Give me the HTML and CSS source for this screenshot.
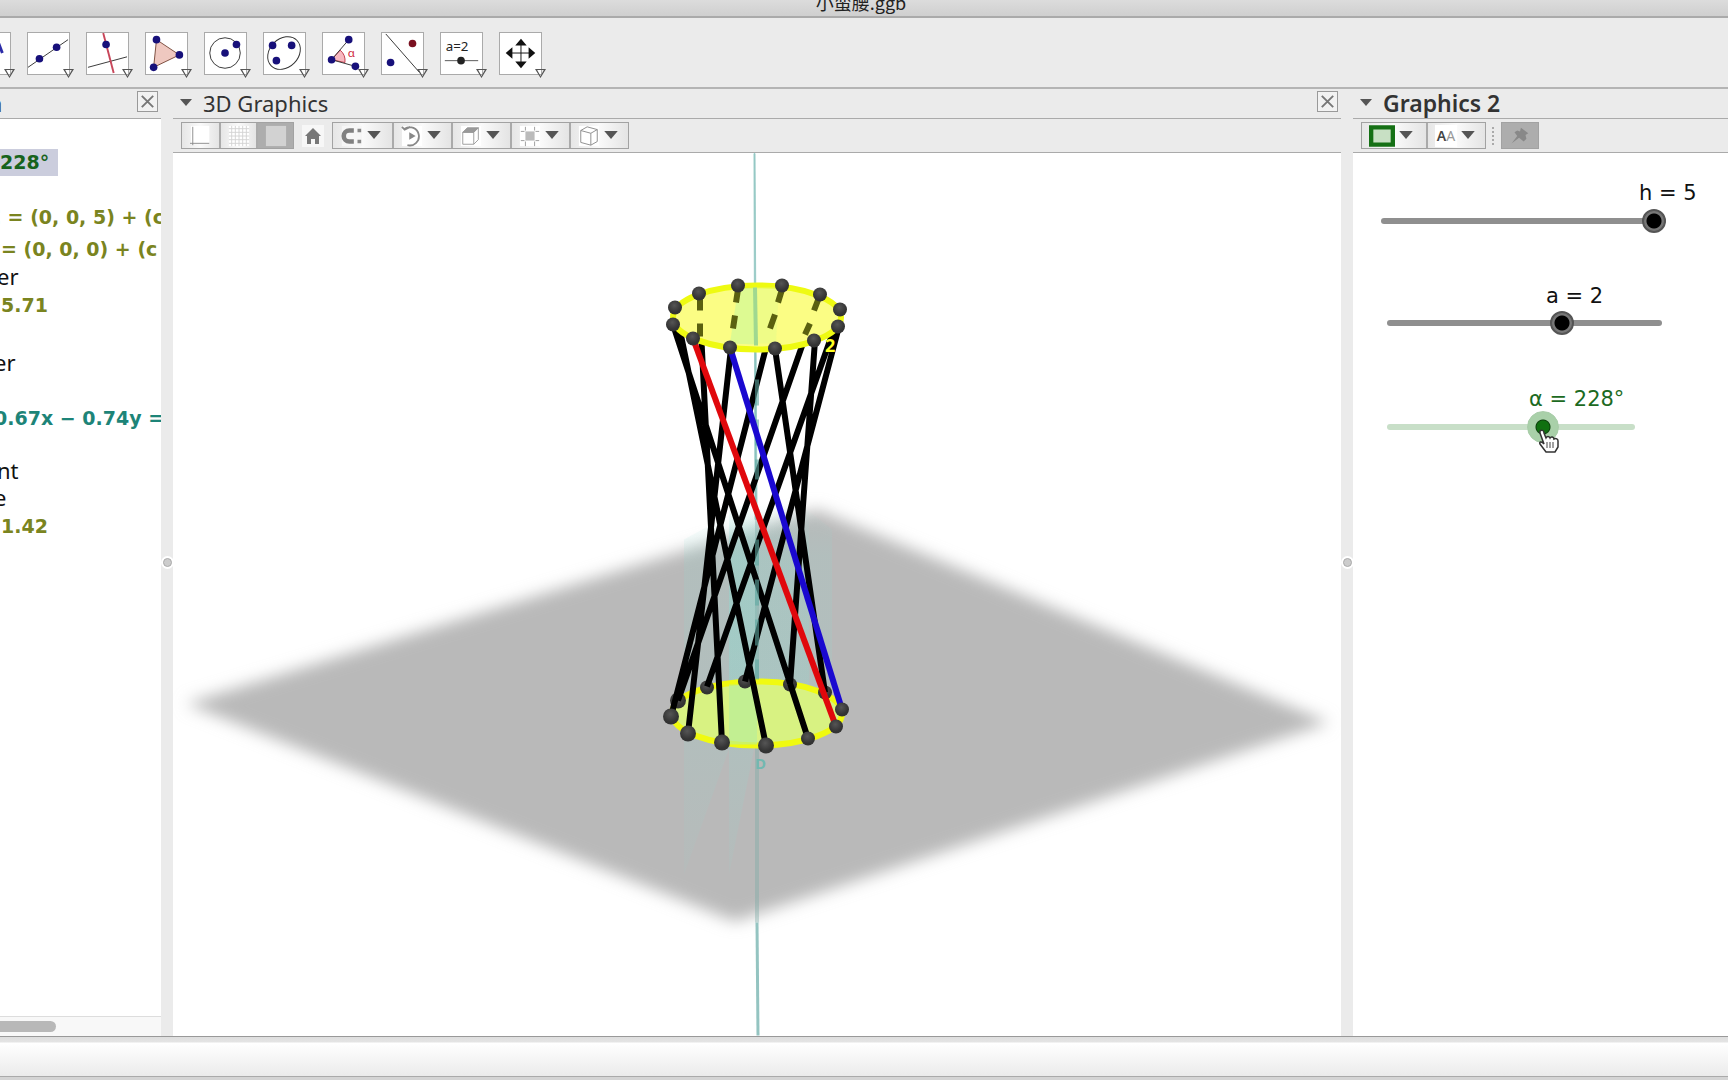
FILE: index.html
```html
<!DOCTYPE html>
<html lang="zh">
<head>
<meta charset="utf-8">
<title>小蛮腰.ggb</title>
<link rel="stylesheet" href="styles.css">
</head>
<body>
<div class="window">
  <header class="titlebar"><span class="titlebar-text">小蛮腰.ggb</span></header>

  <nav class="tools" aria-label="Tools">
    <button class="tool" aria-label="Point"><svg viewBox="0 0 43 43"><path d="M30 8l5 13" stroke="#2c2ca8" stroke-width="3"/></svg></button>
    <button class="tool" aria-label="Line"><svg viewBox="0 0 43 43"><path d="M0 36L42 7" stroke="#333"/><g class="pt"><circle cx="12" cy="27" r="4"/><circle cx="30" cy="15" r="4"/></g></svg></button>
    <button class="tool" aria-label="Perpendicular line"><svg viewBox="0 0 43 43"><path d="M1 36L42 25" stroke="#333"/><path d="M17 0l11 42" stroke="#c8465a" stroke-width="2"/><g class="pt"><circle cx="20" cy="12" r="4"/></g></svg></button>
    <button class="tool" aria-label="Polygon"><svg viewBox="0 0 43 43"><path d="M11 7l24 16L8 36z" fill="#efc8c0" stroke="#7a4a3c"/><g class="pt"><circle cx="11" cy="7" r="4"/><circle cx="35" cy="23" r="4"/><circle cx="8" cy="36" r="4"/></g></svg></button>
    <button class="tool" aria-label="Circle"><svg viewBox="0 0 43 43"><circle cx="21" cy="21" r="16" stroke="#333"/><g class="pt"><circle cx="21" cy="21" r="4"/><circle cx="33" cy="12" r="4"/></g></svg></button>
    <button class="tool" aria-label="Ellipse"><svg viewBox="0 0 43 43"><ellipse cx="21" cy="21" rx="19" ry="15" transform="rotate(-45 21 21)" stroke="#333"/><g class="pt"><circle cx="9" cy="13" r="4"/><circle cx="29" cy="13" r="4"/><circle cx="13" cy="29" r="4"/></g></svg></button>
    <button class="tool" aria-label="Angle"><svg viewBox="0 0 43 43"><path d="M9 28L18 18Q24 23 23 31z" fill="#f7b8c0" stroke="#c03848"/><path d="M27 7L9 28l25 7" stroke="#333"/><text x="26" y="25" font-size="12" fill="#d02840">α</text><g class="pt"><circle cx="27" cy="7" r="4"/><circle cx="9" cy="28" r="4"/><circle cx="34" cy="35" r="4"/></g></svg></button>
    <button class="tool" aria-label="Reflect"><svg viewBox="0 0 43 43"><path d="M4 1l35 40" stroke="#333"/><g class="pt"><circle cx="9" cy="31" r="4"/></g><circle cx="32" cy="11" r="4" fill="#7a1020"/></svg></button>
    <button class="tool" aria-label="Slider"><svg viewBox="0 0 43 43"><text x="5" y="19" font-size="14" fill="#222">a=2</text><path d="M4 29h35" stroke="#555"/><circle cx="21" cy="29" r="4" fill="#222"/></svg></button>
    <button class="tool" aria-label="Move view"><svg viewBox="0 0 43 43"><path d="M10 21h24M22 9v24" stroke="#111"/><path d="M22 6l6 7H16zM22 37l6-7H16zM6 21l7-6v12zM37 21l-7-6v12z" fill="#111"/></svg></button>
  </nav>

  <main class="panels">
    <section class="panel algebra">
      <div class="panel-head"><span class="panel-title">a</span><button class="close" aria-label="Close"><svg viewBox="0 0 20 20"><path d="M4 4l12 12M16 4L4 16"/></svg></button></div>
      <div class="rows">
        <div class="row math selected">228°</div>
        <div class="row math tall olive cut-l first">Ξ = (0, 0, 5) + (c</div>
        <div class="row math tall olive in">= (0, 0, 0) + (c</div>
        <div class="row cut-s">er</div>
        <div class="row math olive in">5.71</div>
        <div class="row cut-m group">er</div>
        <div class="row math teal cut-m group2">0.67x − 0.74y =</div>
        <div class="row cut-s group2">nt</div>
        <div class="row cut-m">e</div>
        <div class="row math olive in">1.42</div>
      </div>
      <div class="hscroll"><div class="hscroll-thumb"></div></div>
    </section>

    <div class="divider"><i></i></div>

    <section class="panel view3d">
      <div class="panel-head"><svg class="tri" viewBox="0 0 12 8"><path d="M0 0h12L6 7z"/></svg><span class="panel-title">3D Graphics</span><button class="close" aria-label="Close"><svg viewBox="0 0 20 20"><path d="M4 4l12 12M16 4L4 16"/></svg></button></div>
      <div class="stylebar">
        <div class="group-btns">
          <button class="sb toggle" aria-label="Axes"><svg viewBox="0 0 24 24"><path d="M1 1h20v20H1z" fill="#fff"/><path d="M3 2v20M0 20h21" stroke="#888"/></svg></button>
          <button class="sb toggle" aria-label="Grid"><svg viewBox="0 0 24 24"><path d="M1 1h22v22H1z" fill="#fff"/><path d="M4 1v22M8 1v22M12 1v22M16 1v22M20 1v22M1 4h22M1 8h22M1 12h22M1 16h22M1 20h22" stroke="#d2d2d2"/></svg></button>
          <button class="sb toggle on" aria-label="Plane"><svg viewBox="0 0 24 24"><path d="M1 1h22v22H1z" fill="#d2d2d2"/></svg></button>
        </div>
        <button class="home" aria-label="Home"><svg viewBox="0 0 22 22"><path d="M11 3l8 8h-2v8h-4v-5H9v5H5v-8H3z" fill="#777"/></svg></button>
        <div class="group-btns">
          <button class="sb drop" aria-label="Snap"><svg viewBox="0 0 24 24"><path d="M1 1h22v22H1z" fill="#f6f6f6"/><path d="M14 6H9a6 6 0 000 12h5" stroke="#808080" stroke-width="5"/><path d="M18 4h4v4h-4zM18 16h4v4h-4z" fill="#888"/></svg><svg class="tri" viewBox="0 0 12 8"><path d="M0 0h12L6 7z"/></svg></button>
          <button class="sb drop" aria-label="Rotate"><svg viewBox="0 0 24 24"><path d="M1 1h22v22H1z" fill="#fff"/><path d="M4 4a10 10 0 11 3 18M1 2l3 3 6-3" stroke="#888" stroke-width="2"/><path d="M9 8l7 4-7 4z" fill="#888"/></svg><svg class="tri" viewBox="0 0 12 8"><path d="M0 0h12L6 7z"/></svg></button>
          <button class="sb drop" aria-label="View direction"><svg viewBox="0 0 24 24"><path d="M1 1h22v22H1z" fill="#fff"/><path d="M3 8h12v13H3zM15 8l5-5v13l-5 5" stroke="#999"/><path d="M3 8l5-5h12l-5 5z" fill="#999" stroke="#999"/></svg><svg class="tri" viewBox="0 0 12 8"><path d="M0 0h12L6 7z"/></svg></button>
          <button class="sb drop" aria-label="Clipping"><svg viewBox="0 0 24 24"><path d="M1 1h22v22H1z" fill="#fff"/><path d="M7 7h10v10H7z" fill="#bbb"/><path d="M7 2v4M17 2v4M7 18v5M17 18v5M2 7h4M18 7h4M2 17h4M18 17h4" stroke="#999"/></svg><svg class="tri" viewBox="0 0 12 8"><path d="M0 0h12L6 7z"/></svg></button>
          <button class="sb drop" aria-label="Projection"><svg viewBox="0 0 24 24"><path d="M1 1h22v22H1z" fill="#fff"/><path d="M3 6l11 3v13l-11-3zM14 9l7-4v13l-7 4M3 6l7-4 11 3" stroke="#888"/></svg><svg class="tri" viewBox="0 0 12 8"><path d="M0 0h12L6 7z"/></svg></button>
        </div>
      </div>
      <svg class="scene" viewBox="173 154 1168 882" preserveAspectRatio="xMidYMid meet">
        <defs>
          <filter id="soft" x="-10%" y="-10%" width="120%" height="120%"><feGaussianBlur stdDeviation="8"/></filter>
          <radialGradient id="ball" cx="45%" cy="35%"><stop offset="0" stop-color="#555"/><stop offset="1" stop-color="#333"/></radialGradient>
          <linearGradient id="fade" x1="0" y1="0" x2="0" y2="1"><stop offset="0" stop-color="#8cdcd2" stop-opacity="0"/><stop offset=".15" stop-color="#8cdcd2"/><stop offset=".6" stop-color="#8cdcd2"/><stop offset="1" stop-color="#8cdcd2" stop-opacity=".4"/></linearGradient>
        </defs>
        <path d="M186 704L817 510l512 213-594 199z" fill="#b9b9b9" filter="url(#soft)"/>
        <g fill="url(#fade)">
          <path d="M684 540l73-40 40 2 35 28v180h-75l-21 20-52 145z" opacity=".15"/>
          <path d="M729 505h80v200l-54 40-26 130z" opacity=".2"/>
          <path d="M729 505h28v240h-28z" opacity=".25"/>
        </g>
        <path d="M754 154h1l2 366h-2z" fill="#82bdb9" stroke="#9bccc8"/>
        <path d="M757 520v403" stroke="#7ba9a5" stroke-width="4" opacity=".4"/>
        <path d="M757 923l1 113" stroke="#94c4c1" stroke-width="3"/>

        <ellipse cx="757" cy="714" rx="85" ry="32" fill="#d8f282" stroke="#f0fa10" stroke-width="6"/>
        <path d="M729 685h28v60h-28z" fill="#b4ec9c" opacity=".6"/>
        <g fill="url(#ball)"><circle cx="825" cy="693" r="7"/><circle cx="790" cy="685" r="7"/><circle cx="745" cy="682" r="7"/><circle cx="707" cy="688" r="7"/><circle cx="678" cy="701" r="8"/></g>

        <g stroke="#000" stroke-width="6">
          <path d="M775 349L825 693M815 341L790 685M839 327L745 682M841 310L707 687M820 295L678 701M782 286L671 717M738 286L688 734M699 293L722 743M675 307L766 746M673 325L808 739"/>
        </g>
        <path d="M757 380v100M757 540v140" stroke="#5fa8a2" stroke-width="4" stroke-dasharray="26 14" opacity=".6"/>
        <path d="M693 339L836 727" stroke="#e0080c" stroke-width="6"/>
        <path d="M730 348L842 710" stroke="#1a08d0" stroke-width="6"/>
        <g fill="url(#ball)"><circle cx="842" cy="710" r="7"/><circle cx="836" cy="727" r="7"/><circle cx="808" cy="739" r="7"/><circle cx="766" cy="746" r="8"/><circle cx="722" cy="743" r="8"/><circle cx="688" cy="734" r="8"/><circle cx="671" cy="717" r="8"/></g>

        <ellipse cx="757" cy="318" rx="84" ry="32" fill="#fbfd84" stroke="#eefa12" stroke-width="6"/>
        <path d="M738 289l19-1v57l-27-1z" fill="#d0f898" opacity=".7"/><path d="M757 288h22l-3 56h-19z" fill="#e8fc88" opacity=".6"/>
        <path d="M755 288l1 58" stroke="#a0d890" stroke-width="4"/>
        <path d="M738 290l-2 13M735 316l-2 13M700 296v15M700 324v13M782 290l-4 13M775 315l-5 14M819 298l-5 13M810 324l-5 11" stroke="#5a6010" stroke-width="6"/>
        <g fill="url(#ball)"><circle cx="699" cy="294" r="7"/><circle cx="738" cy="286" r="7"/><circle cx="782" cy="286" r="7"/><circle cx="820" cy="295" r="7"/><circle cx="840" cy="310" r="7"/><circle cx="838" cy="327" r="7"/><circle cx="814" cy="341" r="7"/><circle cx="775" cy="349" r="7"/><circle cx="730" cy="348" r="7"/><circle cx="693" cy="339" r="7"/><circle cx="673" cy="325" r="7"/><circle cx="675" cy="308" r="7"/></g>
        <text x="825" y="352" font-size="18" font-weight="700" fill="#ffff20">2</text>
        <text x="755" y="769" font-size="15" font-weight="700" fill="#72b8b0">D</text>
      </svg>
    </section>

    <div class="divider"><i></i></div>

    <section class="panel graphics2">
      <div class="panel-head"><svg class="tri" viewBox="0 0 12 8"><path d="M0 0h12L6 7z"/></svg><span class="panel-title bold">Graphics 2</span></div>
      <div class="stylebar">
        <div class="group-btns">
          <button class="sb drop wide" aria-label="Fill colour"><svg viewBox="0 0 24 20"><path d="M2 2h20v16H2z" fill="#c8e0c4" stroke="#157015" stroke-width="4"/></svg><svg class="tri" viewBox="0 0 12 8"><path d="M0 0h12L6 7z"/></svg></button>
          <button class="sb drop" aria-label="Text size"><span class="aa">A<span>A</span></span><svg class="tri" viewBox="0 0 12 8"><path d="M0 0h12L6 7z"/></svg></button>
        </div>
        <span class="grip"></span>
        <button class="sb pin on" aria-label="Pin"><svg viewBox="0 0 24 24"><path d="M13 3l8 6-3 2 1 4-3 3-5-4-8 6 6-8-3-4 3-2 3 1z" fill="#888"/></svg></button>
      </div>
      <div class="canvas2d">
        <label class="lab lab-h" for="h">h = 5</label>
        <input class="range range-h" id="h" type="range" min="0" max="5" value="5">
        <label class="lab lab-a" for="a">a = 2</label>
        <input class="range range-a" id="a" type="range" min="0" max="100" value="65">
        <label class="lab lab-alpha" for="alpha">α = 228°</label>
        <input class="range range-alpha" id="alpha" type="range" min="0" max="100" value="65">
        <svg class="cursor" viewBox="0 0 22 24"><path d="M2 2c2-2 4 0 4 2l2 5c1-2 3-2 4 0 1-2 4-1 4 1 2-1 4 0 4 2v6l-3 5H8l-6-8c-1-2 1-3 3-1l1 1-4-11z" fill="#fff" stroke="#333" stroke-width="1.500"/><path d="M9 13v6M12 13v6M15 13v6" stroke="#444"/></svg>
      </div>
    </section>
  </main>

  <footer class="inputbar"></footer>
  <div class="bottom-edge"></div>
</div>
</body>
</html>
```
FILE: styles.css
```css
* { box-sizing: border-box; }
body {
  margin: 0;
  font-family: "Noto Sans", "Noto Sans CJK SC", sans-serif;
  color: #222;
  background: #ebebeb;
}
button { padding: 0; border: 0; background: none; font: inherit; }
svg { display: block; fill: none; }
svg text { font-family: "Noto Sans", sans-serif; }

.window { display: flex; flex-direction: column; height: 100vh; overflow: hidden; }

.titlebar {
  flex: none;
  display: flex;
  justify-content: center;
  align-items: flex-end;
  height: 18px;
  padding-bottom: 2px;
  overflow: hidden;
  background: linear-gradient(#dcdcdc, #cfcfcf);
  border-bottom: 2px solid #aaa;
}
.titlebar-text { font: 18px/24px "Noto Sans CJK SC", sans-serif; padding-right: 6px; }

.tools {
  flex: none;
  display: flex;
  gap: 16px;
  height: 71px;
  padding-top: 14px;
  margin-left: -32px;
  border-bottom: 2px solid #b4b4b4;
}
.tool {
  position: relative;
  flex: none;
  width: 43px;
  height: 43px;
  background: #fff;
  border: 1px solid #aaa;
}
.tool svg { width: 100%; height: 100%; }
.tool .pt { fill: #17107a; }
.tool::after {
  content: "";
  position: absolute;
  right: -5px;
  bottom: -4px;
  width: 11px;
  height: 9px;
  background: #555;
  clip-path: polygon(0 0, 100% 0, 50% 100%, 0 0, 20% 12%, 50% 78%, 80% 12%, 20% 12%);
}

.panels { flex: 1; display: flex; min-height: 0; }
.panel { display: flex; flex-direction: column; min-width: 0; background: #fff; overflow: hidden; }
.algebra { flex: 0 0 161px; }
.view3d { flex: 1; }
.graphics2 { flex: 0 0 375px; }

.divider { flex: 0 0 12px; display: flex; align-items: center; justify-content: center; background: #ebebeb; }
.divider i { width: 9px; height: 9px; border-radius: 50%; background: #ccc; border: 1px solid #aaa; box-shadow: 0 0 0 2px #fff; }

.panel-head {
  flex: none;
  display: flex;
  align-items: center;
  height: 30px;
  padding-bottom: 2px;
  background: #ebebeb;
  border-bottom: 1px solid #aaa;
}
.panel-title { font-size: 22px; line-height: 26px; color: #333; }
.panel-title.bold { font-weight: 600; font-size: 23px; }
.tri { width: 12px; height: 8px; fill: #555; }
.panel-head .tri { margin: 0 11px 0 7px; }
.close { width: 21px; height: 21px; margin: 0 3px 2px auto; border: 1px solid #999; background: #f2f2f2; }
.close svg { stroke: #777; stroke-width: 2; }
.algebra .panel-title { margin-left: -10px; }

.stylebar {
  flex: none;
  display: flex;
  align-items: center;
  height: 34px;
  padding-left: 8px;
  background: #ebebeb;
  border-bottom: 1px solid #aaa;
}
.group-btns { display: flex; border: 1px solid #a2a2a2; }
.sb {
  display: flex;
  align-items: center;
  justify-content: center;
  gap: 4px;
  height: 25px;
  background: linear-gradient(90deg, #e6e6e6, #fafafa 50%, #e4e4e4);
}
.sb + .sb { border-left: 2px solid #aaa; }
.sb svg { width: 22px; height: 22px; }
.sb .tri { width: 14px; height: 9px; }
.toggle { width: 37px; }
.toggle.on { background: #adadad; }
.drop { width: 59px; padding-right: 3px; }
.wide { width: 64px; padding-right: 6px; }
.wide svg:first-child { width: 26px; }
.pin.on { background: #adadad; }
.home { width: 22px; height: 22px; margin: 0 8px; background: #f7f7f7; }
.aa { width: 22px; background: #fff; font: 600 14px/22px "Noto Sans", sans-serif; color: #444; }
.aa span { font-weight: 400; color: #999; }
.grip { height: 18px; margin: 0 7px 0 6px; border-left: 2px dotted #aaa; }
.pin { width: 38px; height: 27px; border: 1px solid #a2a2a2; }

.rows { flex: 1; padding-top: 30px; font-size: 22px; color: #111; }
.row { height: 27px; line-height: 22px; white-space: pre; }
.math { font: 700 19px/27px "DejaVu Sans", sans-serif; }
.tall { height: 32px; line-height: 33px; }
.selected { width: 58px; background: #cbcddd; color: #17631c; }
.olive { color: #7a8420; }
.teal { color: #1d8478; }
.first { margin-top: 25px; }
.in { padding-left: 1px; }
.group { margin-top: 32px; }
.group2 { margin-top: 27px; }
.cut-s { margin-left: -3px; }
.cut-m { margin-left: -6px; }
.cut-l { margin-left: -11px; }

.hscroll { flex: none; height: 20px; padding-top: 4px; border-top: 1px solid #ddd; background: #f8f8f8; }
.hscroll-thumb { width: 56px; height: 11px; border-radius: 0 6px 6px 0; background: #b8b8b8; }

.scene { flex: 1; width: 100%; min-height: 0; }

.canvas2d { position: relative; flex: 1; }
.lab { position: absolute; font: 21px/28px "DejaVu Sans", sans-serif; color: #111; }
.lab-h { left: 286px; top: 26px; }
.lab-a { left: 193px; top: 129px; }
.lab-alpha { left: 176px; top: 232px; color: #1c6a22; }

.range { -webkit-appearance: none; appearance: none; position: absolute; height: 32px; margin: 0; background: none; }
.range::-webkit-slider-runnable-track { height: 6px; border-radius: 3px; background: #8f8f8f; }
.range::-webkit-slider-thumb {
  -webkit-appearance: none;
  width: 24px;
  height: 24px;
  margin-top: -9px;
  border-radius: 50%;
  border: 2px solid #555;
  background: radial-gradient(circle, #000 7px, #777 8px);
}
.range-h { left: 28px; top: 52px; width: 285px; }
.range-a { left: 34px; top: 154px; width: 275px; }
.range-alpha { left: 34px; top: 258px; width: 248px; }
.range-alpha::-webkit-slider-runnable-track { background: #c8dfc8; }
.range-alpha::-webkit-slider-thumb {
  width: 32px;
  height: 32px;
  margin-top: -13px;
  border: 1px solid #a8cca8;
  background: radial-gradient(circle, #107010 6px, #0c400c 7px, #a9d0a9 8px);
}
.cursor { position: absolute; left: 185px; top: 276px; width: 22px; height: 24px; }

.inputbar {
  flex: none;
  height: 40px;
  border-top: 1px solid #999;
  background: linear-gradient(#dedede, #e4e4e4 5px, #fff 6px, #ebebeb);
}
.bottom-edge { flex: none; height: 4px; border-top: 1px solid #aaa; background: #d4d4d4; }
```
